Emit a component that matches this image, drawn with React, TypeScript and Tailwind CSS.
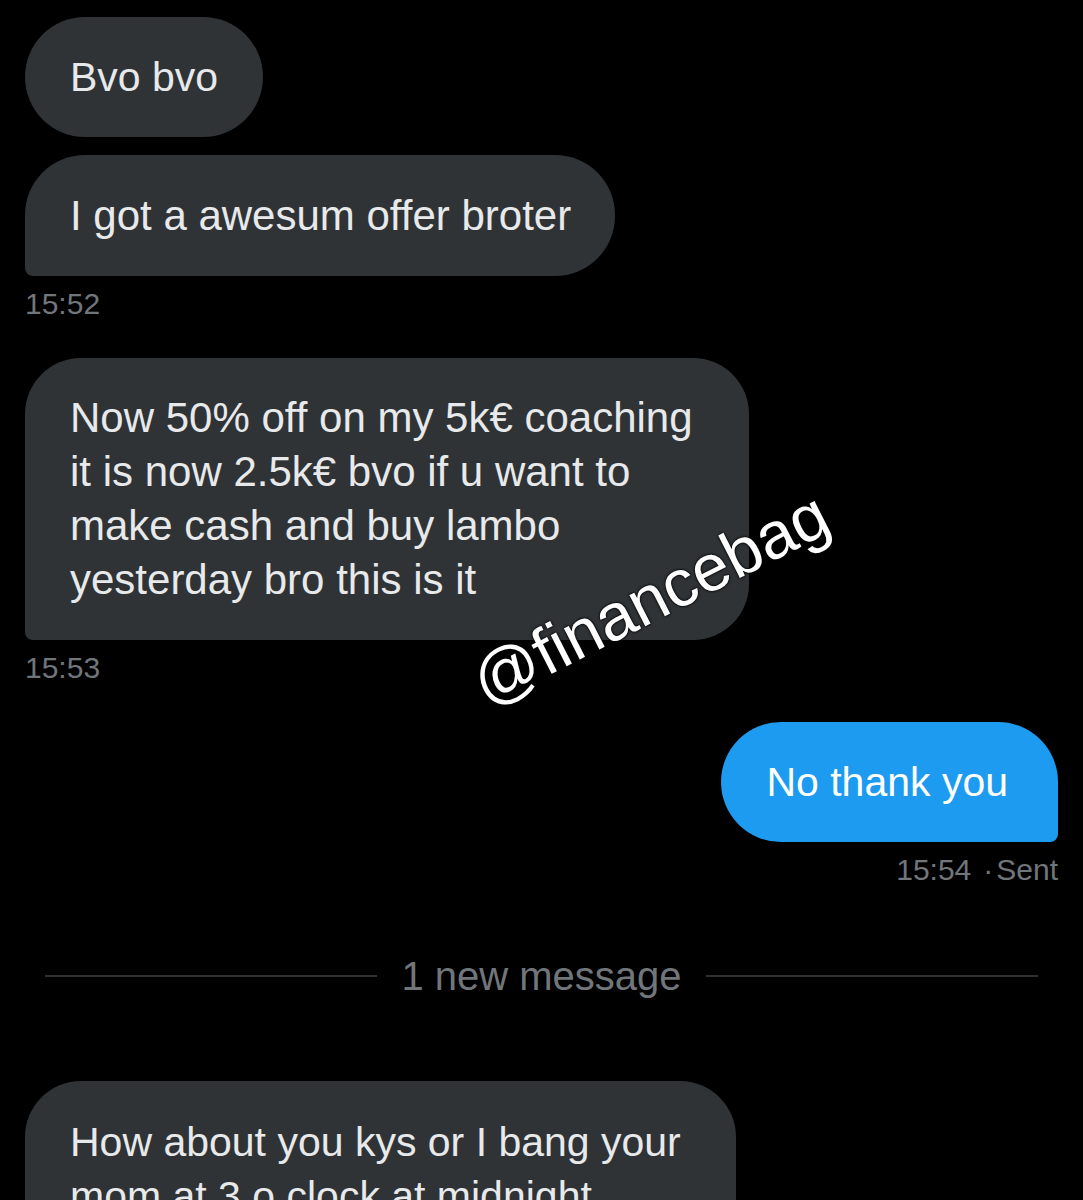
import React from "react";

const gray = "bg-[#2f3336] text-[#e7e9ea]";

export default function App() {
  return (
    <div className="relative w-[1083px] h-[1200px] overflow-hidden bg-black font-['Liberation_Sans',Arial,sans-serif]">
      <div className="flex flex-col px-[25px] pt-[17px]">
        <div className={`self-start h-[120px] rounded-[60px] ${gray} px-[45px] flex items-center text-[41px] leading-[54px]`}>
          Bvo bvo
        </div>
        <div className={`self-start mt-[18px] h-[121px] rounded-[60px] rounded-bl-[8px] ${gray} pl-[45px] pr-[44px] flex items-center text-[42px] leading-[54px]`}>
          I got a awesum offer broter
        </div>
        <div className="self-start mt-[13px] text-[30px] leading-[30px] text-[#71767b]">15:52</div>

        <div className={`self-start mt-[39px] rounded-[56px] rounded-bl-[8px] ${gray} pl-[45px] pr-[56px] py-[33px] text-[42px] leading-[54px] whitespace-nowrap`}>
          Now 50% off on my 5k€ coaching
          <br />
          it is now 2.5k€ bvo if u want to
          <br />
          make cash and buy lambo
          <br />
          yesterday bro this is it
        </div>
        <div className="self-start mt-[13px] text-[30px] leading-[30px] text-[#71767b]">15:53</div>

        <div className="self-end mt-[39px] h-[120px] rounded-[60px] rounded-br-[8px] bg-[#1d9bf0] text-white pl-[45px] pr-[50px] flex items-center text-[41px] leading-[54px]">
          No thank you
        </div>
        <div className="self-end mt-[13px] text-[30px] leading-[30px] text-[#71767b] whitespace-nowrap">
          15:54<span className="ml-[12px]">·</span><span className="ml-[3px]">Sent</span>
        </div>

        <div className="mt-[71px] mx-[20px] h-[40px] flex items-center gap-[24px]">
          <div className="flex-1 h-[2px] bg-[#2f3336]" />
          <div className="text-[40px] leading-[40px] text-[#71767b] whitespace-nowrap">1 new message</div>
          <div className="flex-1 h-[2px] bg-[#2f3336]" />
        </div>

        <div className={`self-start mt-[85px] rounded-[56px] rounded-bl-[8px] ${gray} pl-[45px] pr-[55px] py-[34px] text-[41px] leading-[54px] whitespace-nowrap`}>
          How about you kys or I bang your
          <br />
          mom at 3 o clock at midnight
        </div>
      </div>

      <div className="absolute left-[650px] top-[598px] -translate-x-1/2 -translate-y-1/2 -rotate-[27deg] text-white text-[66px] leading-none whitespace-nowrap [text-shadow:0_0_3px_#000,0_0_2px_#000]">
        @financebag
      </div>
    </div>
  );
}
